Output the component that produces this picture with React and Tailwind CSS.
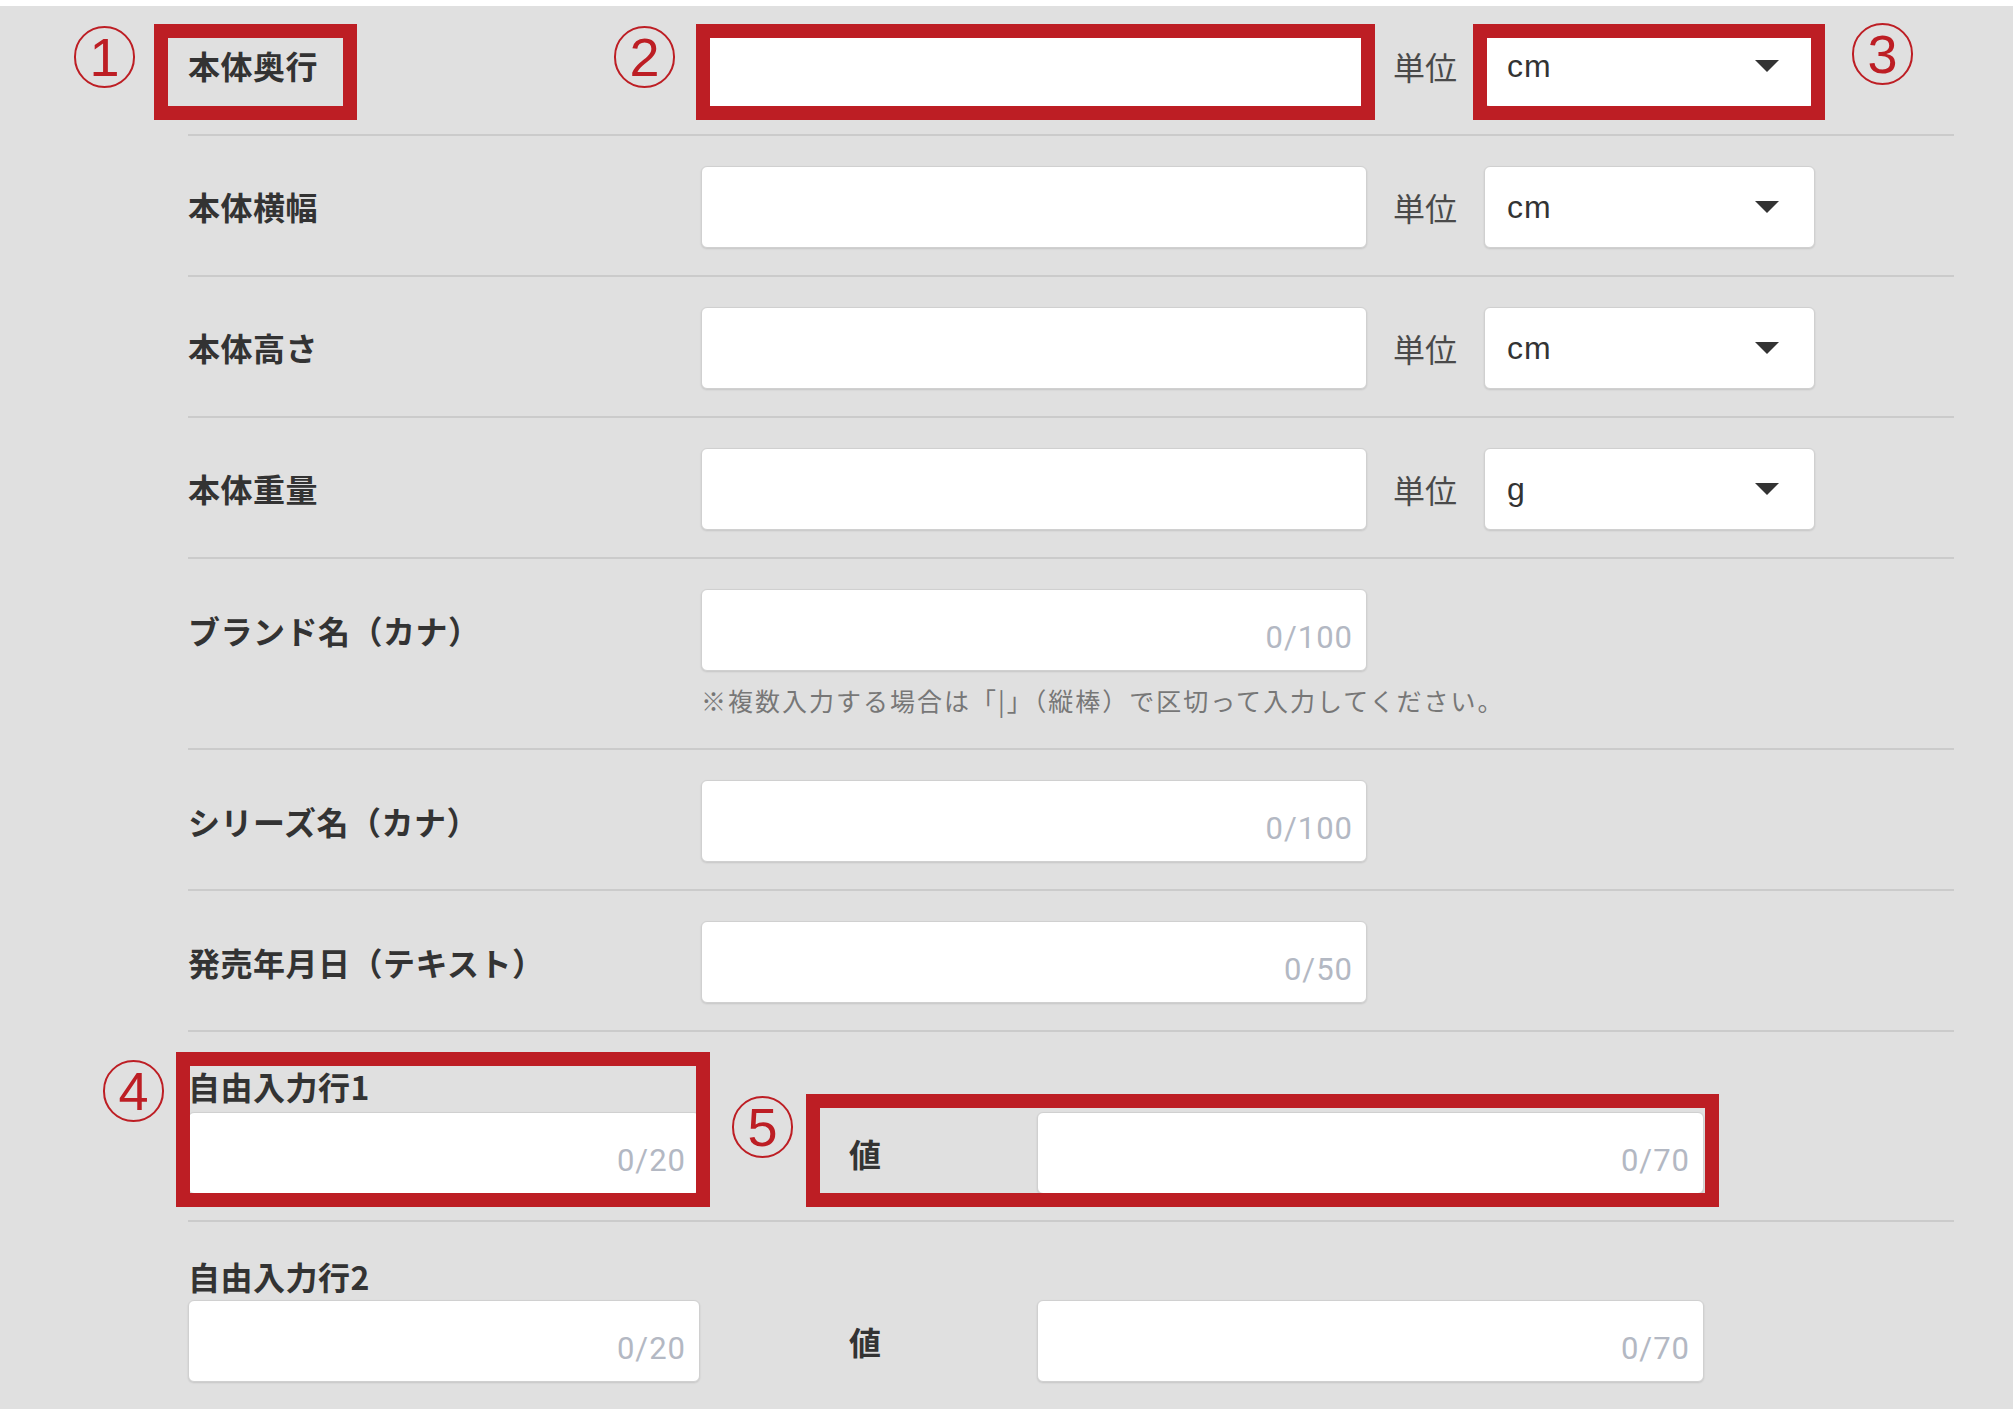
import React from 'react';
import clsx from 'clsx';

const RED = 'border-[#bd1e24]';

const dimensionRows = [
    { label: '本体奥行', unit: 'cm', first: true },
    { label: '本体横幅', unit: 'cm' },
    { label: '本体高さ', unit: 'cm' },
    { label: '本体重量', unit: 'g' },
];

const kanaRows = [
    { label: 'ブランド名（カナ）', counter: '0/100', note: '※複数入力する場合は「|」（縦棒）で区切って入力してください。' },
    { label: 'シリーズ名（カナ）', counter: '0/100' },
    { label: '発売年月日（テキスト）', counter: '0/50' },
];

const Field = ({ counter, className }) => (
    <div
        className={clsx(
            'flex h-[82px] shrink-0 items-center justify-end rounded-[6px] border border-[#d0d0d0] bg-white pr-[13px] pt-[14px] shadow-[0_1px_2px_rgba(0,0,0,0.12)]',
            className
        )}
    >
        {counter && (
            <span className="font-['Roboto',sans-serif] text-[31px] leading-none tracking-[1px] text-[#b3b8c3]">{counter}</span>
        )}
    </div>
);

const Label = ({ children, tall }) => (
    <span
        className={clsx(
            'text-[32px] font-bold tracking-[0.5px] text-[#333]',
            tall ? 'leading-[40px]' : 'leading-none'
        )}
    >
        {children}
    </span>
);

const UnitSelect = ({ value }) => (
    <div className="flex h-[82px] w-[331px] shrink-0 items-center justify-between rounded-[6px] border border-[#d0d0d0] bg-white pl-[22px] pr-[35px] shadow-[0_1px_2px_rgba(0,0,0,0.12)]">
        <span className="font-['Liberation_Sans',sans-serif] text-[32px] leading-none tracking-[1px] text-[#333]">{value}</span>
        <svg width="24" height="12" viewBox="0 0 24 12">
            <polygon points="0,0 24,0 12,12" fill="#333" />
        </svg>
    </div>
);

const DimensionRow = ({ label, unit, first }) => (
    <div className={clsx('flex items-center border-b-2 border-[#cbcbcb] pb-[27px]', first ? 'pt-[19px]' : 'pt-[30px]')}>
        <div className="w-[513px] shrink-0">
            <Label>{label}</Label>
        </div>
        <Field className="w-[666px]" />
        <span className="ml-[26px] text-[32px] leading-none text-[#4a4a4a]">単位</span>
        <div className="ml-[27px]">
            <UnitSelect value={unit} />
        </div>
    </div>
);

const KanaRow = ({ label, counter, note }) => (
    <div className={clsx('flex items-start border-b-2 border-[#cbcbcb] pt-[30px]', note ? 'pb-[31px]' : 'pb-[27px]')}>
        <div className="flex h-[82px] w-[513px] shrink-0 items-center">
            <Label>{label}</Label>
        </div>
        <div className="flex flex-col">
            <Field className="w-[666px]" counter={counter} />
            {note && (
                <p className="mt-[12px] text-[25px] leading-[34px] tracking-[2px] text-[#777]">{note}</p>
            )}
        </div>
    </div>
);

const FreeRow = ({ n, last }) => (
    <div className={clsx('flex items-end pt-[34px]', last ? 'pb-[27px]' : 'border-b-2 border-[#cbcbcb] pb-[26px]')}>
        <div className="flex w-[512px] shrink-0 flex-col">
            <Label tall>自由入力行{n}</Label>
            <Field className={clsx('w-[512px]', n === 1 ? 'mt-[6px]' : 'mt-[4px]')} counter="0/20" />
        </div>
        <div className="ml-[149px] flex h-[82px] w-[188px] shrink-0 items-center">
            <Label>値</Label>
        </div>
        <Field className="w-[667px]" counter="0/70" />
    </div>
);

// numbered callouts drawn over the form
const Callout = ({ n, className }) => (
    <div
        className={clsx(
            'absolute flex h-[62px] w-[61px] items-center justify-center rounded-full border-2 text-[#bd1e24]',
            RED,
            className
        )}
    >
        <span className="font-['Liberation_Sans',sans-serif] text-[54px] font-light leading-none">{n}</span>
    </div>
);

const Frame = ({ className }) => <div className={clsx('pointer-events-none absolute border-[14px]', RED, className)} />;

export default function App() {
    return (
        <div className="relative min-h-screen bg-white pt-[6px] font-['Noto_Sans_CJK_JP',sans-serif]">
            <div className="min-h-[1403px] bg-[#e0e0e0] pl-[188px] pr-[59px]">
                {dimensionRows.map((row) => (
                    <DimensionRow key={row.label} {...row} />
                ))}
                {kanaRows.map((row) => (
                    <KanaRow key={row.label} {...row} />
                ))}
                <FreeRow n={1} />
                <FreeRow n={2} last />
            </div>

            <Frame className="left-[154px] top-[24px] h-[96px] w-[203px]" />
            <Frame className="left-[696px] top-[24px] h-[96px] w-[679px]" />
            <Frame className="left-[1473px] top-[24px] h-[96px] w-[352px]" />
            <Frame className="left-[176px] top-[1052px] h-[155px] w-[534px]" />
            <Frame className="left-[806px] top-[1094px] h-[113px] w-[913px]" />

            <Callout n="1" className="left-[74px] top-[26px]" />
            <Callout n="2" className="left-[614px] top-[26px]" />
            <Callout n="3" className="left-[1852px] top-[23px]" />
            <Callout n="4" className="left-[103px] top-[1060px]" />
            <Callout n="5" className="left-[732px] top-[1096px]" />
        </div>
    );
}
